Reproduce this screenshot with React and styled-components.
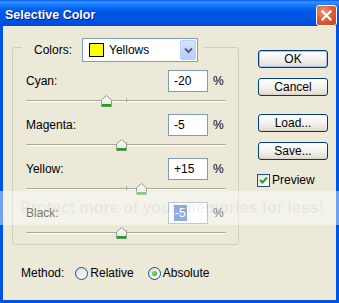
import styled, { createGlobalStyle } from 'styled-components'

const GlobalStyle = createGlobalStyle`
  html, body {
    margin: 0;
    padding: 0;
    background: #ECE9D8;
  }
  body {
    font-family: "Liberation Sans", Arial, sans-serif;
    font-size: 12px;
    color: #000;
  }
`

const channels = [
  { name: 'Cyan', value: -20, text: '-20' },
  { name: 'Magenta', value: -5, text: '-5' },
  { name: 'Yellow', value: 15, text: '+15' },
  { name: 'Black', value: -5, text: '-5', selected: true },
]

function Thumb({ value }) {
  return (
    <ThumbBox style={{ left: 100 + value - 5 }}>
      <svg width="11" height="12" viewBox="0 0 11 12">
        <defs>
          <linearGradient id="tg" x1="0" y1="0" x2="0" y2="1">
            <stop offset="0" stopColor="#ffffff" />
            <stop offset="1" stopColor="#E3E2DA" />
          </linearGradient>
        </defs>
        <path d="M5.5 0.5 L10.5 5 L10.5 11.5 L0.5 11.5 L0.5 5 Z" fill="url(#tg)" stroke="#8F9C8C" />
        <rect x="1" y="9" width="9" height="2.5" fill="#21A121" />
      </svg>
    </ThumbBox>
  )
}

function App() {
  return (
    <>
      <GlobalStyle />
      <WindowBox>
        <TitleBar>
          <span>Selective Color</span>
          <CloseButton>
            <svg width="11" height="11" viewBox="0 0 11 11">
              <path d="M1.5 1.5 L9.5 9.5 M9.5 1.5 L1.5 9.5" stroke="#fff" strokeWidth="2" strokeLinecap="square" />
            </svg>
          </CloseButton>
        </TitleBar>
        <Frame>
          <LeftColumn>
            <Group>
              <Legend>
                <LegendLabel>Colors:</LegendLabel>
                <Select>
                  <Swatch />
                  <SelectText>Yellows</SelectText>
                  <SelectArrow>
                    <svg width="9" height="7" viewBox="0 0 9 7">
                      <path d="M1 1.5 L4.5 5 L8 1.5" fill="none" stroke="#4D6185" strokeWidth="2" />
                    </svg>
                  </SelectArrow>
                </Select>
              </Legend>
              <Rows>
                {channels.map((c) => (
                  <Channel key={c.name}>
                    <ChannelHeader>
                      <ChannelLabel>{c.name}:</ChannelLabel>
                      <ValueBox>
                        {c.selected ? <Selection>{c.text}</Selection> : c.text}
                      </ValueBox>
                      <Percent>%</Percent>
                    </ChannelHeader>
                    <Slider>
                      <Track />
                      <Tick />
                      <Thumb value={c.value} />
                    </Slider>
                  </Channel>
                ))}
              </Rows>
            </Group>
            <MethodRow>
              <MethodLabel>Method:</MethodLabel>
              <Radio />
              <RadioText>Relative</RadioText>
              <Radio $checked />
              <RadioText>Absolute</RadioText>
            </MethodRow>
          </LeftColumn>
          <RightColumn>
            <Button $default $gap={12}>OK</Button>
            <Button $gap={10}>Cancel</Button>
            <Button $gap={18}>Load...</Button>
            <Button $gap={10}>Save...</Button>
            <CheckRow>
              <CheckBox>
                <svg width="9" height="9" viewBox="0 0 9 9">
                  <path d="M1 4 L3.5 6.5 L8 1.5" fill="none" stroke="#21A121" strokeWidth="2" />
                </svg>
              </CheckBox>
              <span>Preview</span>
            </CheckRow>
          </RightColumn>
        </Frame>
        <Watermark>Protect more of your memories for less!</Watermark>
      </WindowBox>
    </>
  )
}

const WindowBox = styled.div`
  position: relative;
  width: 339px;
  height: 303px;
  display: flex;
  flex-direction: column;
  background: #ECE9D8;
  overflow: hidden;
`

const TitleBar = styled.div`
  height: 26px;
  flex: none;
  box-sizing: border-box;
  padding: 4px 2px 0 5px;
  display: flex;
  align-items: center;
  justify-content: space-between;
  background: linear-gradient(to bottom, #0058EE 0, #3A93FF 2px, #1E83FF 4px, #0767F5 8px, #0057E5 12px, #0054E3 20px, #004AD8 26px);
  color: #fff;
  font-weight: bold;
  font-size: 12.5px;
  text-shadow: 1px 1px 0 #0A1883;
`

const CloseButton = styled.div`
  width: 21px;
  height: 21px;
  box-sizing: border-box;
  border: 1px solid #fff;
  border-radius: 3px;
  display: flex;
  align-items: center;
  justify-content: center;
  background: radial-gradient(circle at 35% 30%, #F09A7E 0, #E0613A 45%, #C4411C 100%);
`

const Frame = styled.div`
  flex: 1;
  display: flex;
  gap: 19px;
  padding: 12px 0 0 9px;
  border: 3px solid #0054E3;
  border-top: 0;
`

const LeftColumn = styled.div`
  display: flex;
  flex-direction: column;
`

const Group = styled.fieldset`
  width: 227px;
  box-sizing: border-box;
  margin: 0;
  padding: 14px 9px 0 13px;
  border: 1px solid #D0D0BF;
  border-radius: 3px;
  min-inline-size: 0;
`

const Legend = styled.legend`
  display: flex;
  align-items: flex-start;
  height: 18px;
  margin-left: -4px;
  padding: 0 5px 0 12px;
`

const LegendLabel = styled.span`
  line-height: 24px;
  margin-right: 10px;
`

const Select = styled.div`
  width: 116px;
  height: 24px;
  box-sizing: border-box;
  border: 1px solid #7F9DB9;
  background: #fff;
  display: flex;
  align-items: center;
  padding: 0 1px 0 6px;
`

const Swatch = styled.div`
  width: 15px;
  height: 14px;
  box-sizing: border-box;
  border: 1px solid #000;
  background: #FFFF00;
  margin-right: 5px;
`

const SelectText = styled.span`
  flex: 1;
`

const SelectArrow = styled.div`
  width: 16px;
  height: 20px;
  box-sizing: border-box;
  border: 1px solid #BAD0F8;
  border-radius: 2px;
  background: linear-gradient(to bottom, #D7E3FD, #B8CCF9);
  display: flex;
  align-items: center;
  justify-content: center;
`

const Rows = styled.div`
  display: flex;
  flex-direction: column;
  gap: 2px;
`

const Channel = styled.div`
  display: flex;
  flex-direction: column;
`

const ChannelHeader = styled.div`
  height: 22px;
  display: flex;
  align-items: center;
`

const ChannelLabel = styled.span`
  flex: 1;
`

const ValueBox = styled.div`
  width: 40px;
  height: 22px;
  box-sizing: border-box;
  border: 1px solid #7F9DB9;
  background: #fff;
  padding-left: 5px;
  line-height: 20px;
`

const Selection = styled.span`
  background: #316AC5;
  color: #fff;
  padding: 1px 1px;
`

const Percent = styled.span`
  width: 16px;
  padding-left: 5px;
`

const Slider = styled.div`
  position: relative;
  height: 20px;
  width: 200px;
`

const Track = styled.div`
  margin-top: 8px;
  height: 1px;
  border-radius: 1px;
  background: #A9A79B;
  box-shadow: 0 1px 0 #fff;
`

const Tick = styled.div`
  position: absolute;
  left: 100px;
  top: 6px;
  width: 1px;
  height: 4px;
  background: #A9A79B;
`

const ThumbBox = styled.div`
  position: absolute;
  top: 3px;
  width: 11px;
  height: 12px;
  display: flex;
`

const MethodRow = styled.div`
  margin: 20px 0 0 9px;
  height: 16px;
  display: flex;
  align-items: center;
`

const MethodLabel = styled.span`
  margin-right: 11px;
`

const Radio = styled.div`
  width: 13px;
  height: 13px;
  box-sizing: border-box;
  border-radius: 50%;
  border: 1px solid #1C5180;
  background: linear-gradient(135deg, #DCDCD7, #fff);
  margin-right: 2px;
  display: flex;
  align-items: center;
  justify-content: center;

  &::after {
    content: '';
    display: ${(p) => (p.$checked ? 'block' : 'none')};
    width: 5px;
    height: 5px;
    border-radius: 50%;
    background: radial-gradient(circle at 35% 35%, #7FE07B, #21A121);
  }
`

const RadioText = styled.span`
  margin-right: 14px;
`

const RightColumn = styled.div`
  width: 70px;
  display: flex;
  flex-direction: column;
`

const Button = styled.div`
  margin-top: ${(p) => p.$gap}px;
  height: 18px;
  box-sizing: border-box;
  border: 1px solid #003C74;
  border-radius: 3px;
  background: linear-gradient(to bottom, #FFFFFF 0%, #F4F3EE 50%, #E3E0D6 90%, #D6D0C5 100%);
  box-shadow: ${(p) => (p.$default ? 'inset 0 0 0 1px #A6C4F2' : 'none')};
  display: flex;
  align-items: center;
  justify-content: center;
`

const CheckRow = styled.div`
  margin: 13px 0 0 -1px;
  display: flex;
  align-items: center;
  gap: 2px;
`

const CheckBox = styled.div`
  width: 13px;
  height: 13px;
  box-sizing: border-box;
  border: 1px solid #1C5180;
  background: linear-gradient(135deg, #E4E3DC, #fff);
  display: flex;
  align-items: center;
  justify-content: center;
`

const Watermark = styled.div`
  position: absolute;
  left: 0;
  right: 0;
  top: 191px;
  height: 34px;
  padding-left: 20px;
  line-height: 34px;
  background: rgba(255, 255, 255, 0.45);
  color: rgba(120, 110, 90, 0.09);
  font-weight: bold;
  font-size: 16px;
  white-space: nowrap;
`

export default App
